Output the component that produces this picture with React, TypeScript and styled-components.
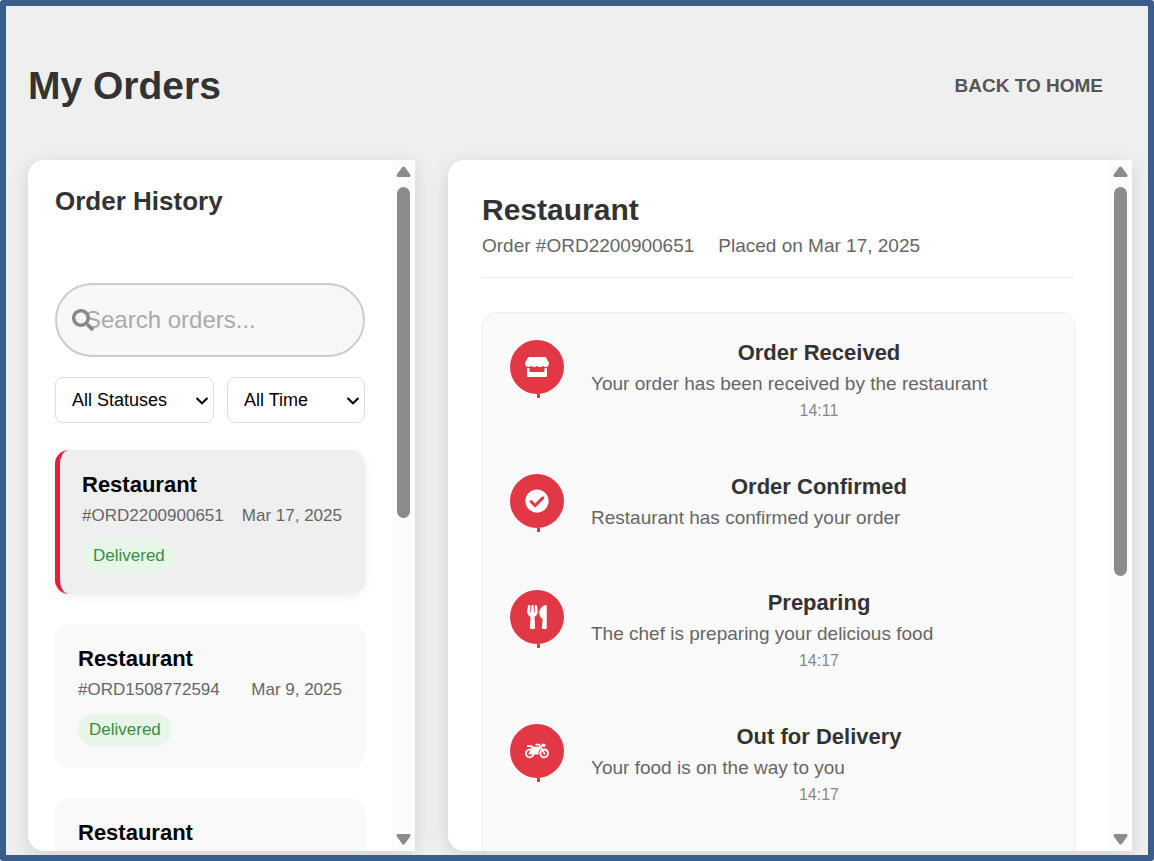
import React from 'react';
import styled, { createGlobalStyle } from 'styled-components';
import {
  FaCheckCircle,
  FaMotorcycle,
  FaSearch,
  FaStore,
  FaUtensils,
} from 'react-icons/fa';

const GlobalStyle = createGlobalStyle`
  *, *::before, *::after { box-sizing: border-box; }
  body {
    margin: 0;
    background: #fff;
    font-family: "Liberation Sans", Arial, Helvetica, sans-serif;
    color: #333;
  }
  h1, h2, h3, p, ul, ol { margin: 0; padding: 0; }
  ul, ol { list-style: none; }
  button, input, select { font-family: inherit; }
`;

const Page = styled.div`
  display: flex;
  flex-direction: column;
  height: 100vh;
  padding: 54px 16px 4px 22px;
  border: 6px solid #3a5e8c;
  border-radius: 3px;
  background: #efefef;
  overflow: hidden;
`;

const Header = styled.header`
  display: flex;
  align-items: center;
  justify-content: space-between;
  margin-bottom: 48px;
  padding-right: 29px;
`;

const PageTitle = styled.h1`
  font-size: 39px;
  line-height: 52px;
`;

const BackLink = styled.a`
  font-size: 19px;
  line-height: 24px;
  font-weight: bold;
  color: #555;
  text-decoration: none;
  text-transform: uppercase;
`;

const Columns = styled.main`
  display: grid;
  grid-template-columns: 387px minmax(0, 1fr);
  gap: 33px;
  flex: 1;
  min-height: 0;
`;

const Panel = styled.section`
  display: flex;
  min-height: 0;
  border-radius: 16px 0 0 16px;
  background: #fff;
  box-shadow: 0 5px 20px rgba(0, 0, 0, 0.12);
  overflow: hidden;
`;

const PanelBody = styled.div<{ $pad: number }>`
  flex: 1;
  min-width: 0;
  padding: ${(p) => p.$pad}px;
  overflow-y: auto;
  scrollbar-width: none;
`;

const Track = styled.div`
  display: flex;
  flex-direction: column;
  align-items: center;
  flex: 0 0 23px;
  padding: 6px 0;
  gap: 10px;
  background: #fcfcfc;
`;

const Arrow = styled.svg`
  flex: none;
  width: 15px;
  height: 11px;
  fill: #8b8b8b;
  stroke: #8b8b8b;
  stroke-width: 3;
  stroke-linejoin: round;
`;

const ThumbLane = styled.div`
  flex: 1;
`;

const Thumb = styled.div<{ $share: number }>`
  width: 13px;
  height: ${(p) => p.$share}%;
  border-radius: 7px;
  background: #8b8b8b;
`;

const HistoryTitle = styled.h2`
  margin-bottom: 68px;
  font-size: 26px;
  line-height: 28px;
`;

const SearchBox = styled.label`
  display: block;
  position: relative;
  margin-bottom: 20px;
  color: #888;

  svg {
    position: absolute;
    left: 17px;
    top: 26px;
  }
`;

const SearchInput = styled.input`
  display: block;
  width: 100%;
  height: 74px;
  padding: 0 28px;
  border: 2px solid #ccc;
  border-radius: 37px;
  background: #f7f7f7;
  font-size: 24px;
  color: #333;

  &::placeholder { color: #aaa; opacity: 1; }
`;

const Filters = styled.div`
  display: flex;
  gap: 13px;
  margin-bottom: 27px;
`;

const SelectWrap = styled.div<{ $grow: number }>`
  position: relative;
  flex: ${(p) => p.$grow} 1 0;

  svg {
    position: absolute;
    right: 5px;
    top: 19px;
    pointer-events: none;
  }
`;

const Select = styled.select`
  appearance: none;
  display: block;
  width: 100%;
  height: 46px;
  padding: 0 16px;
  border: 1px solid #ddd;
  border-radius: 8px;
  background: #fff;
  font-size: 18px;
  color: #000;
`;

const OrderList = styled.ul`
  display: grid;
  gap: 30px;
`;

const OrderCard = styled.button<{ $active?: boolean }>`
  display: block;
  width: 100%;
  padding: 22px 23px;
  padding-left: ${(p) => (p.$active ? 22 : 23)}px;
  border: 0;
  border-left: ${(p) => (p.$active ? '5px solid #e41e3f' : '0')};
  border-radius: 14px;
  background: ${(p) => (p.$active ? '#efefef' : '#f9f9f9')};
  box-shadow: ${(p) => (p.$active ? '0 3px 11px rgba(0, 0, 0, 0.06)' : 'none')};
  text-align: left;
  cursor: pointer;
`;

const OrderName = styled.h3`
  margin-bottom: 8px;
  font-size: 22px;
  line-height: 26px;
  color: #000;
`;

const OrderMeta = styled.div`
  display: flex;
  justify-content: space-between;
  margin-bottom: 14px;
  font-size: 17px;
  line-height: 20px;
  color: #666;
`;

const Badge = styled.span`
  display: block;
  width: fit-content;
  padding: 0 11px;
  border-radius: 16px;
  background: #e8f5e9;
  font-size: 17px;
  line-height: 32px;
  color: #388e3c;
`;

const DetailHeader = styled.header`
  margin-bottom: 34px;
  padding-bottom: 20px;
  border-bottom: 1px solid #eee;
`;

const DetailTitle = styled.h2`
  margin-bottom: 9px;
  font-size: 30px;
  line-height: 32px;
`;

const DetailMeta = styled.div`
  display: flex;
  gap: 24px;
  font-size: 19px;
  line-height: 22px;
  color: #666;
`;

const Timeline = styled.ol`
  display: grid;
  gap: 54px;
  padding: 27px;
  border: 1px solid #eee;
  border-radius: 14px;
  background: #fafafa;
`;

const Step = styled.li`
  display: flex;
  gap: 27px;
  min-height: 62px;
`;

const StepIcon = styled.div`
  position: relative;
  display: flex;
  align-items: center;
  justify-content: center;
  flex: none;
  width: 54px;
  height: 54px;
  border-radius: 50%;
  background: #e23744;
  color: #fff;

  &::after {
    content: "";
    position: absolute;
    left: 50%;
    top: 100%;
    width: 3px;
    height: 4px;
    background: #e23744;
  }
`;

const StepText = styled.div`
  flex: 1;
  min-width: 0;
`;

const StepTitle = styled.h3`
  margin-bottom: 6px;
  font-size: 22px;
  line-height: 25px;
  text-align: center;
`;

const StepDescription = styled.p`
  font-size: 19px;
  line-height: 25px;
  color: #666;
`;

const StepTime = styled.time`
  display: block;
  margin-top: 5px;
  font-size: 16px;
  line-height: 19px;
  text-align: center;
  color: #888;
`;

const orders = [
  { id: '#ORD2200900651', date: 'Mar 17, 2025' },
  { id: '#ORD1508772594', date: 'Mar 9, 2025' },
  { id: '#ORD1508772411', date: 'Mar 9, 2025' },
];

const steps = [
  { title: 'Order Received', text: 'Your order has been received by the restaurant', time: '14:11', icon: FaStore },
  { title: 'Order Confirmed', text: 'Restaurant has confirmed your order', icon: FaCheckCircle },
  { title: 'Preparing', text: 'The chef is preparing your delicious food', time: '14:17', icon: FaUtensils },
  { title: 'Out for Delivery', text: 'Your food is on the way to you', time: '14:17', icon: FaMotorcycle },
  { title: 'Delivered', text: 'Enjoy your meal!', icon: FaCheckCircle },
];

function Chevron() {
  return (
    <svg width="14" height="10" viewBox="0 0 14 10" fill="none" stroke="#000" strokeWidth="2" aria-hidden="true">
      <path d="M1.5 2 L7 7.3 L12.5 2" />
    </svg>
  );
}

function Scrollbar({ share }: { share: number }) {
  return (
    <Track aria-hidden="true">
      <Arrow viewBox="0 0 15 11"><path d="M7.5 2 L13 9.5 H2 Z" /></Arrow>
      <ThumbLane><Thumb $share={share} /></ThumbLane>
      <Arrow viewBox="0 0 15 11"><path d="M7.5 9 L13 1.5 H2 Z" /></Arrow>
    </Track>
  );
}

export default function App() {
  return (
    <>
      <GlobalStyle />
      <Page>
        <Header>
          <PageTitle>My Orders</PageTitle>
          <BackLink href="/">Back to Home</BackLink>
        </Header>
        <Columns>
          <Panel>
            <PanelBody $pad={27}>
              <HistoryTitle>Order History</HistoryTitle>
              <SearchBox>
                <SearchInput type="text" placeholder="Search orders..." aria-label="Search orders" />
                <FaSearch size={22} />
              </SearchBox>
              <Filters>
                <SelectWrap $grow={159}>
                  <Select aria-label="Status"><option>All Statuses</option></Select>
                  <Chevron />
                </SelectWrap>
                <SelectWrap $grow={138}>
                  <Select aria-label="Time period"><option>All Time</option></Select>
                  <Chevron />
                </SelectWrap>
              </Filters>
              <OrderList>
                {orders.map((order, i) => (
                  <li key={order.id}>
                    <OrderCard type="button" $active={i === 0}>
                      <OrderName>Restaurant</OrderName>
                      <OrderMeta>
                        <span>{order.id}</span>
                        <span>{order.date}</span>
                      </OrderMeta>
                      <Badge>Delivered</Badge>
                    </OrderCard>
                  </li>
                ))}
              </OrderList>
            </PanelBody>
            <Scrollbar share={52} />
          </Panel>
          <Panel>
            <PanelBody $pad={34}>
              <DetailHeader>
                <DetailTitle>Restaurant</DetailTitle>
                <DetailMeta>
                  <span>Order #ORD2200900651</span>
                  <span>Placed on Mar 17, 2025</span>
                </DetailMeta>
              </DetailHeader>
              <Timeline>
                {steps.map(({ title, text, time, icon: Icon }) => (
                  <Step key={title}>
                    <StepIcon><Icon size={24} /></StepIcon>
                    <StepText>
                      <StepTitle>{title}</StepTitle>
                      <StepDescription>{text}</StepDescription>
                      {time && <StepTime>{time}</StepTime>}
                    </StepText>
                  </Step>
                ))}
              </Timeline>
            </PanelBody>
            <Scrollbar share={61} />
          </Panel>
        </Columns>
      </Page>
    </>
  );
}
